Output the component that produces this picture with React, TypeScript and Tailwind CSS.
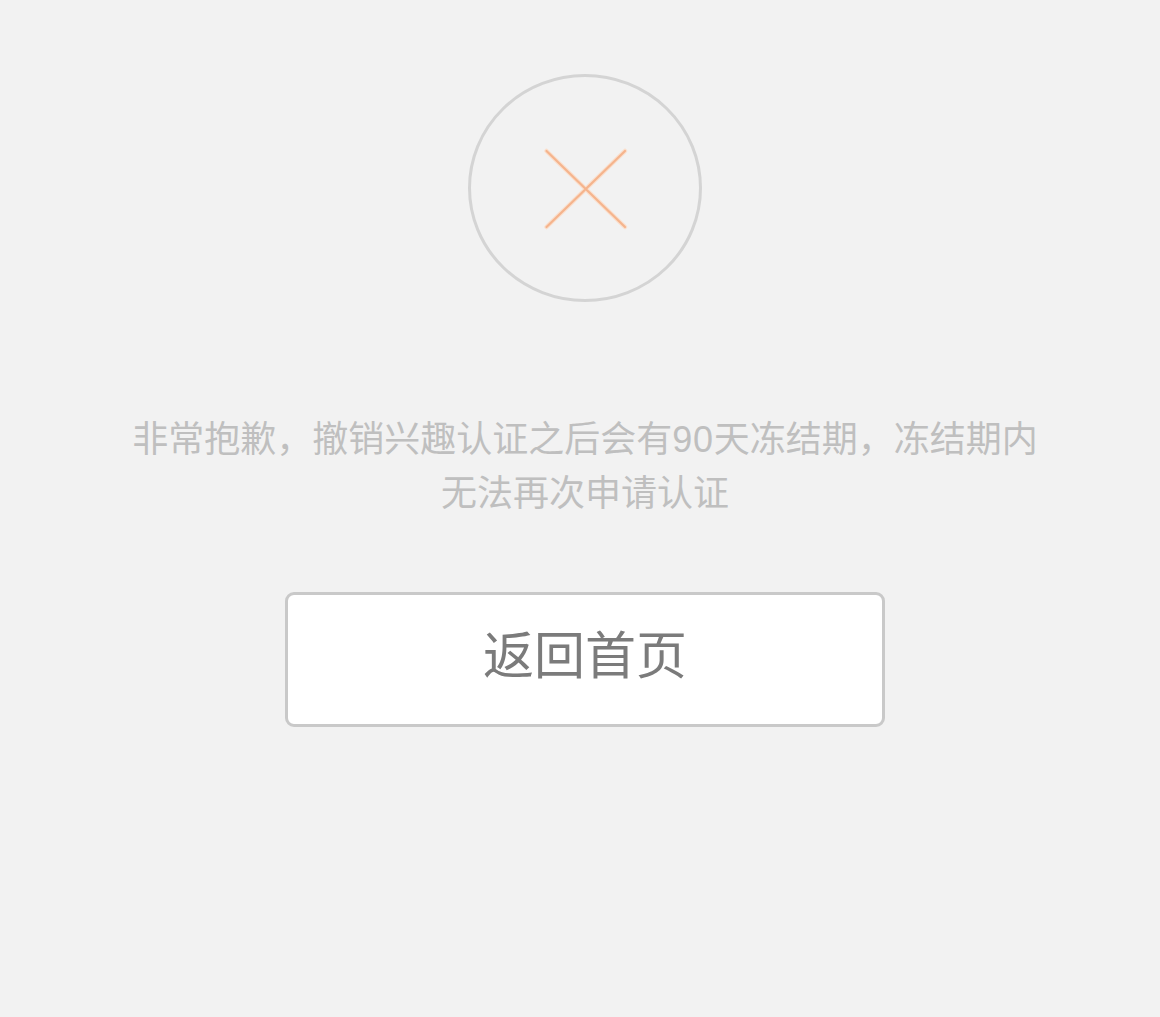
export default function App() {
  return (
    <div className="min-h-screen bg-[#f2f2f2] flex flex-col items-center pl-[10px] pt-[73px] font-['Liberation_Sans','Noto_Sans_CJK_SC',sans-serif]">
      <svg width="236" height="230" viewBox="0 0 236 230" fill="none">
        <ellipse cx="118" cy="115" rx="115.5" ry="112.5" stroke="#d4d4d4" strokeWidth="3" />
        <path d="M79.5 78L158 154M158 78L79.5 154" stroke="#fbdfcc" strokeWidth="4.5" strokeLinecap="round" />
        <path d="M79.5 78L158 154M158 78L79.5 154" stroke="#f5b48d" strokeWidth="2.2" strokeLinecap="round" />
      </svg>

      <p className="mt-[110px] text-center text-[36px] leading-[54px] text-[#bfbfbf] whitespace-nowrap">
        非常抱歉，撤销兴趣认证之后会有<span className="tracking-[0.7px]">90</span>天冻结期，冻结期内
        <br />
        无法再次申请认证
      </p>

      <button
        type="button"
        className="mt-[71px] w-[600px] h-[135px] pb-[4px] rounded-[9px] border-[3px] border-[#c9c9c9] bg-white text-[51px] text-[#7b7b7b]">
        返回首页
      </button>
    </div>
  );
}
